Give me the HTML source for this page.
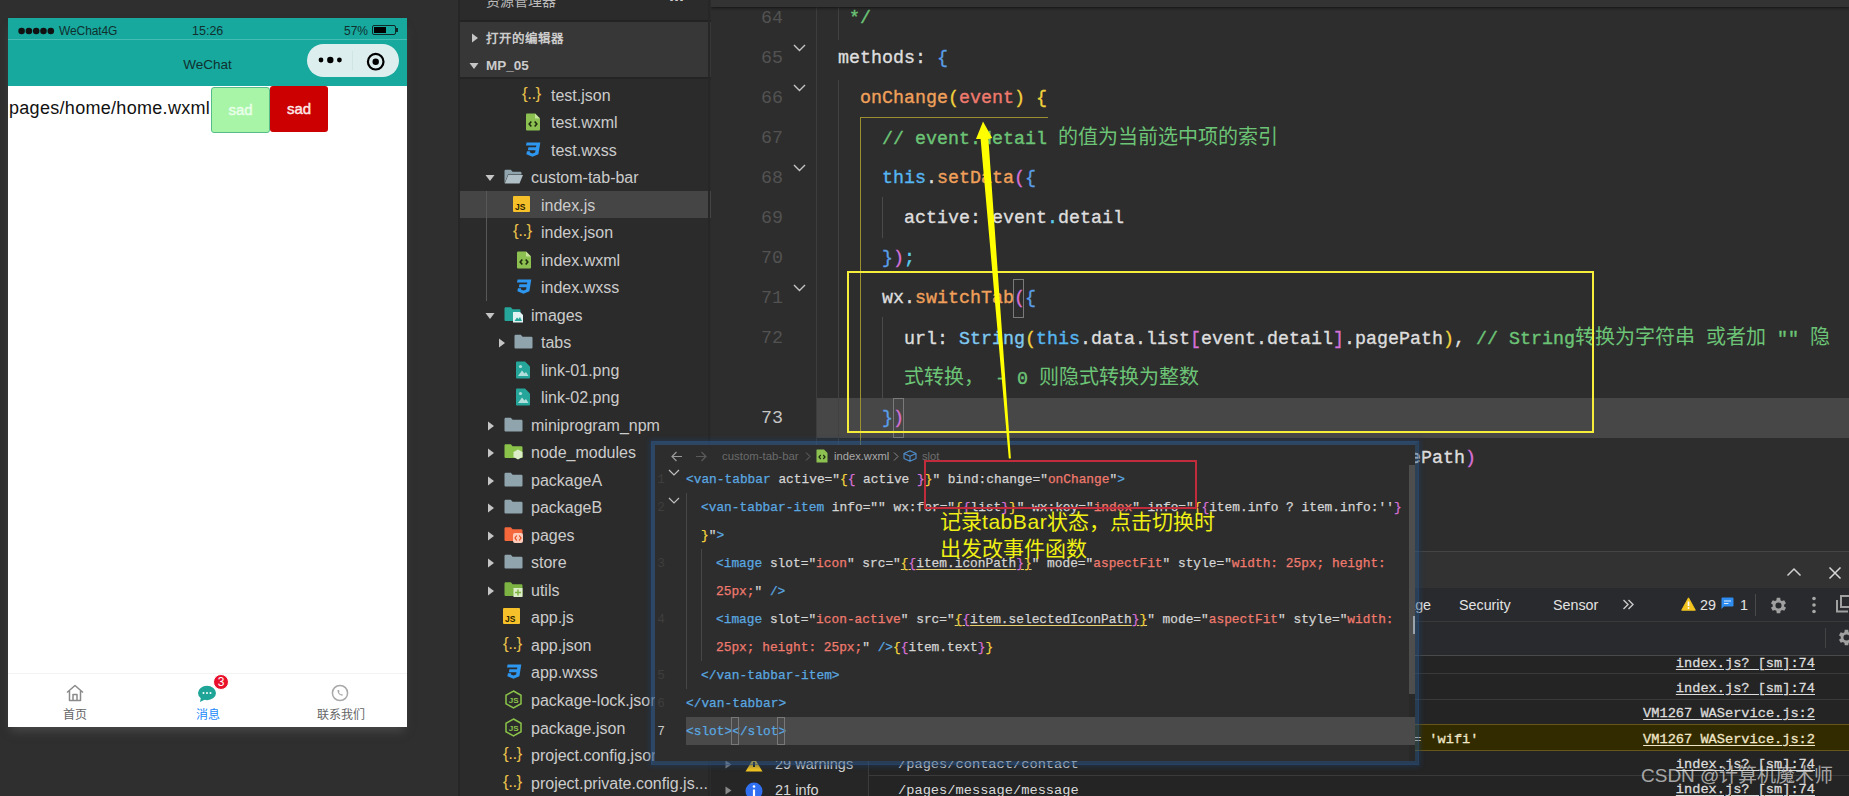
<!DOCTYPE html>
<html lang="zh-CN"><head><meta charset="utf-8">
<style>
*{margin:0;padding:0;box-sizing:border-box}
html,body{width:1849px;height:796px;overflow:hidden;background:#2f2f2f;font-family:"Liberation Sans",sans-serif}
.a{position:absolute}
.mono{font-family:"Liberation Mono",monospace}
/* phone */
#phone{left:8px;top:18px;width:399px;height:709px;background:#fff;box-shadow:0 7px 9px -3px rgba(75,75,75,.9);overflow:hidden}
#bar{left:0;top:0;width:399px;height:68px;background:#17a89e}
/* explorer */
#exp{left:458px;top:0;width:253px;height:796px;background:#2b2b2b;overflow:hidden;border-left:2px solid #262626}
.row{position:absolute;left:0;width:251px;height:28px;line-height:28px;font-size:16px;color:#cccccc;white-space:nowrap}
.row .t{position:absolute;top:0}
.row svg{position:absolute}
/* editor */
#ed{left:711px;top:0;width:1138px;height:796px;background:#2d2d2d;overflow:hidden}
.ln{position:absolute;left:0;width:72px;text-align:right;font-family:"Liberation Mono",monospace;font-size:18.33px;color:#525252;height:40px;line-height:40px}
.cl{position:absolute;font-family:"Liberation Mono",monospace;font-size:18.33px;height:40px;line-height:40px;white-space:pre;color:#dcdcdc;-webkit-text-stroke:0.35px currentColor}
.cj{font-size:20px;-webkit-text-stroke:0}
</style></head><body>

<!-- PHONE -->
<div id="phone" class="a">
  <div id="bar" class="a">
    <!-- status -->
    <div class="a" style="left:0;top:21px;width:399px;height:1px;background:#45bdb4"></div>
    <svg class="a" style="left:10px;top:7.5px" width="40" height="10" viewBox="0 0 40 10"><circle cx="3.6" cy="5" r="3.3" fill="#111"/><circle cx="10.9" cy="5" r="3.3" fill="#111"/><circle cx="18.2" cy="5" r="3.3" fill="#111"/><circle cx="25.5" cy="5" r="3.3" fill="#111"/><circle cx="32.8" cy="5" r="3.3" fill="#111"/></svg>
    <div class="a" style="left:51px;top:4.5px;font-size:12px;line-height:16px;color:#10302e;letter-spacing:-0.1px">WeChat4G</div>
    <div class="a" style="left:184px;top:4.5px;font-size:12.5px;line-height:16px;color:#10302e">15:26</div>
    <div class="a" style="left:336px;top:4.5px;font-size:12px;line-height:16px;color:#10302e">57%</div>
    <div class="a" style="left:364px;top:7px;width:24px;height:10px;border:1.5px solid #0f2a28;border-radius:2px"></div>
    <div class="a" style="left:366px;top:9px;width:12px;height:6px;background:#000"></div>
    <div class="a" style="left:388px;top:10px;width:2px;height:4px;background:#0f2a28"></div>
    <!-- nav -->
    <div class="a" style="left:0;top:38px;width:399px;text-align:center;font-size:13.5px;line-height:18px;color:#10302e">WeChat</div>
    <div class="a" style="left:299px;top:26px;width:92px;height:33px;border-radius:17px;background:#dcefee"></div>
    <div class="a" style="left:344px;top:33px;width:1px;height:19px;background:#cfe5e4"></div>
    <svg class="a" style="left:308px;top:37px" width="30" height="10" viewBox="0 0 30 10">
      <circle cx="5" cy="5" r="2.4" fill="#000"/><circle cx="14.3" cy="5" r="3.2" fill="#000"/><circle cx="23.4" cy="5" r="2.4" fill="#000"/>
    </svg>
    <svg class="a" style="left:357px;top:33px" width="22" height="22" viewBox="0 0 22 22">
      <circle cx="10.7" cy="10.7" r="7.8" fill="none" stroke="#000" stroke-width="2.2"/><circle cx="10.7" cy="10.7" r="3.2" fill="#000"/>
    </svg>
  </div>
  <!-- content -->
  <div class="a" style="left:1px;top:77.5px;font-size:18px;line-height:24px;color:#111;letter-spacing:0.3px">pages/home/home.wxml</div>
  <div class="a" style="left:203px;top:69px;width:59px;height:46px;background:#a8f5a8;border:1px solid #55bb88;border-radius:3px;color:#eaffea;font-size:15px;line-height:44px;text-align:center;-webkit-text-stroke:0.45px #eaffea">sad</div>
  <div class="a" style="left:262px;top:68px;width:58px;height:46px;background:#cc0000;border-radius:3px;color:#ffe8e8;font-size:15px;line-height:46px;text-align:center;-webkit-text-stroke:0.45px #ffe8e8">sad</div>
  <!-- tabbar -->
  <div class="a" style="left:0;top:655px;width:399px;height:1px;background:#f2f2f2"></div>
  <svg class="a" style="left:57px;top:665px" width="20" height="20" viewBox="0 0 20 20">
    <path d="M2 9.5 L10 2.5 L18 9.5 M4.5 8 V17.5 H15.5 V8 M8 17.5 V11.5 H12 V17.5" fill="none" stroke="#8a8a8a" stroke-width="1.5" stroke-linejoin="round"/>
  </svg>
  <div class="a" style="left:0;top:689px;width:133px;text-align:center;font-size:12px;line-height:16px;color:#646566">首页</div>
  <svg class="a" style="left:189px;top:666px" width="22" height="20" viewBox="0 0 22 20">
    <ellipse cx="10" cy="9" rx="9" ry="7.2" fill="#1fa598"/><path d="M4 13 L3 18 L9 15 Z" fill="#1fa598"/>
    <circle cx="6.5" cy="9" r="1" fill="#fff"/><circle cx="10" cy="9" r="1" fill="#fff"/><circle cx="13.5" cy="9" r="1" fill="#fff"/>
  </svg>
  <div class="a" style="left:205px;top:656px;width:16px;height:16px;border-radius:8px;background:#e8102a;border:1px solid #fff;color:#fff;font-size:12px;line-height:14px;text-align:center">3</div>
  <div class="a" style="left:133px;top:689px;width:133px;text-align:center;font-size:12px;line-height:16px;color:#1989fa">消息</div>
  <svg class="a" style="left:322px;top:665px" width="20" height="20" viewBox="0 0 20 20">
    <circle cx="10" cy="10" r="7.6" fill="none" stroke="#a8a8a8" stroke-width="1.5"/>
    <path d="M7.6 7 C7.2 9.5 9.2 12.4 12.3 12.8 L12.9 11.7 L11.7 10.9 L11.1 11.5 C10.1 11 9.3 10.1 9 9.1 L9.6 8.5 L9 7 Z" fill="#a8a8a8"/>
  </svg>
  <div class="a" style="left:266px;top:689px;width:133px;text-align:center;font-size:12px;line-height:16px;color:#646566">联系我们</div>
</div>

<!-- EXP -->
<div id="exp" class="a">
  <div class="a" style="left:26px;top:-8px;font-size:14px;line-height:18px;color:#bbbbbb">资源管理器</div>
  <div class="a" style="left:209px;top:-9px;font-size:18px;line-height:18px;color:#cccccc;font-weight:bold;letter-spacing:-1px">···</div>
  <div class="a" style="left:0;top:20px;width:251px;height:2px;background:#232323"></div>
  <div class="a" style="left:0;top:22px;width:251px;height:55px;background:#373737"></div>
  <svg class="a" style="left:11px;top:32.5px" width="8" height="10" viewBox="0 0 8 10"><path d="M1 0.5 V9.5 L7 5 Z" fill="#c5c5c5"/></svg>
  <div class="a" style="left:26px;top:27.5px;font-size:12.5px;line-height:22px;color:#cccccc;font-weight:bold">打开的编辑器</div>
  <svg class="a" style="left:9px;top:62px" width="10" height="8" viewBox="0 0 10 8"><path d="M0.5 1 H9.5 L5 7 Z" fill="#c5c5c5"/></svg>
  <div class="a" style="left:26px;top:54.5px;font-size:13.5px;line-height:22px;color:#cccccc;font-weight:bold">MP_05</div>
  <div class="a" style="left:0;top:77px;width:251px;height:2px;background:#242424"></div>
  <div class="a" style="left:0;top:191px;width:251px;height:27px;background:#454545"></div>
  <div class="a" style="left:26px;top:191px;width:1px;height:110px;background:#585858"></div>

<div class="row" style="top:81.5px"><div class="a" style="left:62px;top:-1px;font-size:17px;line-height:26px;color:#e8c04a;letter-spacing:-0.5px">{..}</div><span class="t" style="left:91px">test.json</span></div>
<div class="row" style="top:109.0px"><svg style="left:65px;top:4px" width="16" height="18" viewBox="0 0 16 18"><path d="M1 1.5 Q1 0.5 2 0.5 H10 L15 5.5 V16.5 Q15 17.5 14 17.5 H2 Q1 17.5 1 16.5 Z" fill="#8cc152"/><path d="M10 0.5 V5.5 H15" fill="#c5e39a"/><path d="M6.3 8.5 L4.2 11 L6.3 13.5 M9.7 8.5 L11.8 11 L9.7 13.5" fill="none" stroke="#1e2a10" stroke-width="1.6"/></svg><span class="t" style="left:91px">test.wxml</span></div>
<div class="row" style="top:136.5px"><svg style="left:64px;top:4px" width="18" height="18" viewBox="0 0 18 18"><path d="M2.6 1.5 H16.3 L14.4 13.2 L8.5 15.8 L2.4 13.2 L2.9 10.3 H6.1 L5.9 11.6 L8.6 12.6 L11.1 11.6 L11.5 9.2 H3.9 L4.4 6.3 H12 L12.3 4.6 H2 Z" fill="#2e97f0"/></svg><span class="t" style="left:91px">test.wxss</span></div>
<div class="row" style="top:164.1px"><svg style="left:25px;top:10px" width="10" height="8" viewBox="0 0 10 8"><path d="M0.5 1 H9.5 L5 7 Z" fill="#c5c5c5"/></svg><svg style="left:44px;top:5px" width="19" height="15" viewBox="0 0 19 15"><path d="M0.5 2 Q0.5 0.8 1.7 0.8 H6.8 L8.6 2.8 H16.3 Q17.5 2.8 17.5 4 V5.5 H4 L0.5 14.5 Z" fill="#90a4ae"/><path d="M4.2 6 H19 L15.5 14.5 H0.8 Z" fill="#b0bec5"/></svg><span class="t" style="left:71px">custom-tab-bar</span></div>
<div class="row" style="top:191.6px"><svg style="left:53px;top:4px" width="17" height="16" viewBox="0 0 17 16"><rect x="0" y="0" width="17" height="16" rx="1" fill="#f5c02a"/><text x="12.5" y="13.5" text-anchor="end" font-family="Liberation Sans" font-weight="bold" font-size="8.5" fill="#2a2000">JS</text></svg><span class="t" style="left:81px">index.js</span></div>
<div class="row" style="top:219.1px"><div class="a" style="left:53px;top:-1px;font-size:17px;line-height:26px;color:#e8c04a;letter-spacing:-0.5px">{..}</div><span class="t" style="left:81px">index.json</span></div>
<div class="row" style="top:246.6px"><svg style="left:56px;top:4px" width="16" height="18" viewBox="0 0 16 18"><path d="M1 1.5 Q1 0.5 2 0.5 H10 L15 5.5 V16.5 Q15 17.5 14 17.5 H2 Q1 17.5 1 16.5 Z" fill="#8cc152"/><path d="M10 0.5 V5.5 H15" fill="#c5e39a"/><path d="M6.3 8.5 L4.2 11 L6.3 13.5 M9.7 8.5 L11.8 11 L9.7 13.5" fill="none" stroke="#1e2a10" stroke-width="1.6"/></svg><span class="t" style="left:81px">index.wxml</span></div>
<div class="row" style="top:274.1px"><svg style="left:55px;top:4px" width="18" height="18" viewBox="0 0 18 18"><path d="M2.6 1.5 H16.3 L14.4 13.2 L8.5 15.8 L2.4 13.2 L2.9 10.3 H6.1 L5.9 11.6 L8.6 12.6 L11.1 11.6 L11.5 9.2 H3.9 L4.4 6.3 H12 L12.3 4.6 H2 Z" fill="#2e97f0"/></svg><span class="t" style="left:81px">index.wxss</span></div>
<div class="row" style="top:301.7px"><svg style="left:25px;top:10px" width="10" height="8" viewBox="0 0 10 8"><path d="M0.5 1 H9.5 L5 7 Z" fill="#c5c5c5"/></svg><svg style="left:44px;top:4px" width="20" height="17" viewBox="0 0 20 17"><path d="M0.5 2.5 Q0.5 1.3 1.7 1.3 H6.8 L8.6 3.3 H15.3 Q16.5 3.3 16.5 4.5 V15 H1.5 Q0.5 15 0.5 14 Z" fill="#26a69a"/><path d="M9 6 H16 L19 9 V16.5 H9 Z" fill="#e0f2f1"/><path d="M10.5 15 L13 11.5 L14.5 13 L16 11 L18 15 Z" fill="#26a69a"/></svg><span class="t" style="left:71px">images</span></div>
<div class="row" style="top:329.2px"><svg style="left:38px;top:9px" width="8" height="10" viewBox="0 0 8 10"><path d="M1 0.5 V9.5 L7 5 Z" fill="#c5c5c5"/></svg><svg style="left:54px;top:5px" width="19" height="15" viewBox="0 0 19 15"><path d="M0.5 2 Q0.5 0.8 1.7 0.8 H6.8 L8.6 2.8 H17.3 Q18.5 2.8 18.5 4 V13.5 Q18.5 14.5 17.5 14.5 H1.5 Q0.5 14.5 0.5 13.5 Z" fill="#90a4ae"/></svg><span class="t" style="left:81px">tabs</span></div>
<div class="row" style="top:356.7px"><svg style="left:55px;top:4px" width="16" height="18" viewBox="0 0 16 18"><path d="M1 1.5 Q1 0.5 2 0.5 H10 L15 5.5 V16.5 Q15 17.5 14 17.5 H2 Q1 17.5 1 16.5 Z" fill="#26a69a"/><path d="M3.5 3 H9 V7 H13 V15 H3.5 Z" fill="#2b2b2b" opacity="0.0"/><circle cx="5.5" cy="5.5" r="1.6" fill="#b2dfdb"/><path d="M3 15 L7 9.5 L9.5 12.5 L11 11 L13.5 15 Z" fill="#b2dfdb"/></svg><span class="t" style="left:81px">link-01.png</span></div>
<div class="row" style="top:384.2px"><svg style="left:55px;top:4px" width="16" height="18" viewBox="0 0 16 18"><path d="M1 1.5 Q1 0.5 2 0.5 H10 L15 5.5 V16.5 Q15 17.5 14 17.5 H2 Q1 17.5 1 16.5 Z" fill="#26a69a"/><path d="M3.5 3 H9 V7 H13 V15 H3.5 Z" fill="#2b2b2b" opacity="0.0"/><circle cx="5.5" cy="5.5" r="1.6" fill="#b2dfdb"/><path d="M3 15 L7 9.5 L9.5 12.5 L11 11 L13.5 15 Z" fill="#b2dfdb"/></svg><span class="t" style="left:81px">link-02.png</span></div>
<div class="row" style="top:411.7px"><svg style="left:27px;top:9px" width="8" height="10" viewBox="0 0 8 10"><path d="M1 0.5 V9.5 L7 5 Z" fill="#c5c5c5"/></svg><svg style="left:44px;top:5px" width="19" height="15" viewBox="0 0 19 15"><path d="M0.5 2 Q0.5 0.8 1.7 0.8 H6.8 L8.6 2.8 H17.3 Q18.5 2.8 18.5 4 V13.5 Q18.5 14.5 17.5 14.5 H1.5 Q0.5 14.5 0.5 13.5 Z" fill="#90a4ae"/></svg><span class="t" style="left:71px">miniprogram_npm</span></div>
<div class="row" style="top:439.3px"><svg style="left:27px;top:9px" width="8" height="10" viewBox="0 0 8 10"><path d="M1 0.5 V9.5 L7 5 Z" fill="#c5c5c5"/></svg><svg style="left:44px;top:4px" width="20" height="17" viewBox="0 0 20 17"><path d="M0.5 2.5 Q0.5 1.3 1.7 1.3 H6.8 L8.6 3.3 H17.3 Q18.5 3.3 18.5 4.5 V15 H1.5 Q0.5 15 0.5 14 Z" fill="#8bc34a"/><path d="M14 6.5 L18.5 9 V14 L14 16.5 L9.5 14 V9 Z" fill="#dcedc8"/></svg><span class="t" style="left:71px">node_modules</span></div>
<div class="row" style="top:466.8px"><svg style="left:27px;top:9px" width="8" height="10" viewBox="0 0 8 10"><path d="M1 0.5 V9.5 L7 5 Z" fill="#c5c5c5"/></svg><svg style="left:44px;top:5px" width="19" height="15" viewBox="0 0 19 15"><path d="M0.5 2 Q0.5 0.8 1.7 0.8 H6.8 L8.6 2.8 H17.3 Q18.5 2.8 18.5 4 V13.5 Q18.5 14.5 17.5 14.5 H1.5 Q0.5 14.5 0.5 13.5 Z" fill="#90a4ae"/></svg><span class="t" style="left:71px">packageA</span></div>
<div class="row" style="top:494.3px"><svg style="left:27px;top:9px" width="8" height="10" viewBox="0 0 8 10"><path d="M1 0.5 V9.5 L7 5 Z" fill="#c5c5c5"/></svg><svg style="left:44px;top:5px" width="19" height="15" viewBox="0 0 19 15"><path d="M0.5 2 Q0.5 0.8 1.7 0.8 H6.8 L8.6 2.8 H17.3 Q18.5 2.8 18.5 4 V13.5 Q18.5 14.5 17.5 14.5 H1.5 Q0.5 14.5 0.5 13.5 Z" fill="#90a4ae"/></svg><span class="t" style="left:71px">packageB</span></div>
<div class="row" style="top:521.8px"><svg style="left:27px;top:9px" width="8" height="10" viewBox="0 0 8 10"><path d="M1 0.5 V9.5 L7 5 Z" fill="#c5c5c5"/></svg><svg style="left:44px;top:4px" width="20" height="17" viewBox="0 0 20 17"><path d="M0.5 2.5 Q0.5 1.3 1.7 1.3 H6.8 L8.6 3.3 H17.3 Q18.5 3.3 18.5 4.5 V15 H1.5 Q0.5 15 0.5 14 Z" fill="#f4683c"/><rect x="9" y="7" width="10" height="10" rx="2" fill="#ffccbc"/><path d="M12.8 9.5 L11 12 L12.8 14.5 M15.2 9.5 L17 12 L15.2 14.5" fill="none" stroke="#e64a19" stroke-width="1.2"/></svg><span class="t" style="left:71px">pages</span></div>
<div class="row" style="top:549.3px"><svg style="left:27px;top:9px" width="8" height="10" viewBox="0 0 8 10"><path d="M1 0.5 V9.5 L7 5 Z" fill="#c5c5c5"/></svg><svg style="left:44px;top:5px" width="19" height="15" viewBox="0 0 19 15"><path d="M0.5 2 Q0.5 0.8 1.7 0.8 H6.8 L8.6 2.8 H17.3 Q18.5 2.8 18.5 4 V13.5 Q18.5 14.5 17.5 14.5 H1.5 Q0.5 14.5 0.5 13.5 Z" fill="#90a4ae"/></svg><span class="t" style="left:71px">store</span></div>
<div class="row" style="top:576.9px"><svg style="left:27px;top:9px" width="8" height="10" viewBox="0 0 8 10"><path d="M1 0.5 V9.5 L7 5 Z" fill="#c5c5c5"/></svg><svg style="left:44px;top:4px" width="20" height="17" viewBox="0 0 20 17"><path d="M0.5 2.5 Q0.5 1.3 1.7 1.3 H6.8 L8.6 3.3 H17.3 Q18.5 3.3 18.5 4.5 V15 H1.5 Q0.5 15 0.5 14 Z" fill="#7cb342"/><rect x="9.5" y="7" width="9" height="9" fill="#dcedc8"/><path d="M14 8.5 V14.5 M11 11.5 H17" stroke="#7cb342" stroke-width="1.4"/></svg><span class="t" style="left:71px">utils</span></div>
<div class="row" style="top:604.4px"><svg style="left:43px;top:4px" width="17" height="16" viewBox="0 0 17 16"><rect x="0" y="0" width="17" height="16" rx="1" fill="#f5c02a"/><text x="12.5" y="13.5" text-anchor="end" font-family="Liberation Sans" font-weight="bold" font-size="8.5" fill="#2a2000">JS</text></svg><span class="t" style="left:71px">app.js</span></div>
<div class="row" style="top:631.9px"><div class="a" style="left:43px;top:-1px;font-size:17px;line-height:26px;color:#e8c04a;letter-spacing:-0.5px">{..}</div><span class="t" style="left:71px">app.json</span></div>
<div class="row" style="top:659.4px"><svg style="left:45px;top:4px" width="18" height="18" viewBox="0 0 18 18"><path d="M2.6 1.5 H16.3 L14.4 13.2 L8.5 15.8 L2.4 13.2 L2.9 10.3 H6.1 L5.9 11.6 L8.6 12.6 L11.1 11.6 L11.5 9.2 H3.9 L4.4 6.3 H12 L12.3 4.6 H2 Z" fill="#2e97f0"/></svg><span class="t" style="left:71px">app.wxss</span></div>
<div class="row" style="top:686.9px"><svg style="left:44px;top:3px" width="19" height="19" viewBox="0 0 19 19"><path d="M9.5 1 L17 5.3 V13.7 L9.5 18 L2 13.7 V5.3 Z" fill="none" stroke="#8bc34a" stroke-width="1.5"/><text x="9.6" y="13" text-anchor="middle" font-family="Liberation Sans" font-weight="bold" font-size="8" fill="#8bc34a">JS</text></svg><span class="t" style="left:71px">package-lock.json</span></div>
<div class="row" style="top:714.5px"><svg style="left:44px;top:3px" width="19" height="19" viewBox="0 0 19 19"><path d="M9.5 1 L17 5.3 V13.7 L9.5 18 L2 13.7 V5.3 Z" fill="none" stroke="#8bc34a" stroke-width="1.5"/><text x="9.6" y="13" text-anchor="middle" font-family="Liberation Sans" font-weight="bold" font-size="8" fill="#8bc34a">JS</text></svg><span class="t" style="left:71px">package.json</span></div>
<div class="row" style="top:742.0px"><div class="a" style="left:43px;top:-1px;font-size:17px;line-height:26px;color:#e8c04a;letter-spacing:-0.5px">{..}</div><span class="t" style="left:71px">project.config.json</span></div>
<div class="row" style="top:769.5px"><div class="a" style="left:43px;top:-1px;font-size:17px;line-height:26px;color:#e8c04a;letter-spacing:-0.5px">{..}</div><span class="t" style="left:71px">project.private.config.js...</span></div>
<div class="a" style="left:248px;top:0;width:2px;height:796px;background:#272727"></div>
</div>

<!-- /EXP -->

<!-- ED -->
<div id="ed" class="a">
<div class="a" style="left:105px;top:398px;width:1100px;height:40px;background:#474747"></div>
<div class="a" style="left:105px;top:0;width:1px;height:796px;background:#3d3d3d"></div>
<div class="a" style="left:127px;top:0;width:1px;height:40px;background:#414141"></div>
<div class="a" style="left:127px;top:80px;width:1px;height:400px;background:#414141"></div>
<div class="a" style="left:171px;top:197px;width:1px;height:41px;background:#4a4a4a"></div>
<div class="a" style="left:171px;top:317px;width:1px;height:81px;background:#4a4a4a"></div>
<div class="a" style="left:149px;top:117px;width:188px;height:1px;background:#9c8f30"></div>
<div class="a" style="left:149px;top:117px;width:1px;height:360px;background:#9c8f30"></div>
<div class="ln" style="top:-1px">64</div>
<div class="cl" style="left:127px;top:-1px"><span style="color:#6cc476"> */</span></div>
<div class="ln" style="top:39px">65</div>
<div class="cl" style="left:127px;top:39px"><span style="color:#dedede">methods: </span><span style="color:#5a9ee8">{</span></div>
<div class="ln" style="top:79px">66</div>
<div class="cl" style="left:149px;top:79px"><span style="color:#f0a05a">onChange</span><span style="color:#f2d23c">(</span><span style="color:#f07a6e">event</span><span style="color:#f2d23c">)</span><span style="color:#dedede"> </span><span style="color:#f2d23c">{</span></div>
<div class="ln" style="top:119px">67</div>
<div class="cl" style="left:171px;top:119px"><span style="color:#6cc476">// event.detail <span class="cj">的</span><span class="cj">值</span><span class="cj">为</span><span class="cj">当</span><span class="cj">前</span><span class="cj">选</span><span class="cj">中</span><span class="cj">项</span><span class="cj">的</span><span class="cj">索</span><span class="cj">引</span></span></div>
<div class="ln" style="top:159px">68</div>
<div class="cl" style="left:171px;top:159px"><span style="color:#56b6f0">this</span><span style="color:#dedede">.</span><span style="color:#f0a05a">setData</span><span style="color:#d670d6">(</span><span style="color:#5a9ee8">{</span></div>
<div class="ln" style="top:199px">69</div>
<div class="cl" style="left:193px;top:199px"><span style="color:#dedede">active: event</span><span style="color:#5ad0f0">.</span><span style="color:#dedede">detail</span></div>
<div class="ln" style="top:239px">70</div>
<div class="cl" style="left:171px;top:239px"><span style="color:#5a9ee8">}</span><span style="color:#d670d6">)</span><span style="color:#5ad0f0">;</span></div>
<div class="ln" style="top:279px">71</div>
<div class="cl" style="left:171px;top:279px"><span style="color:#dedede">wx.</span><span style="color:#f0a05a">switchTab</span><span style="color:#d670d6">(</span><span style="color:#5a9ee8">{</span></div>
<div class="ln" style="top:319px">72</div>
<div class="cl" style="left:193px;top:319px"><span style="color:#dedede">url: </span><span style="color:#7ec8f0">String</span><span style="color:#f2d23c">(</span><span style="color:#56b6f0">this</span><span style="color:#dedede">.data.list</span><span style="color:#d670d6">[</span><span style="color:#dedede">event.detail</span><span style="color:#d670d6">]</span><span style="color:#dedede">.pagePath</span><span style="color:#f2d23c">)</span><span style="color:#dedede">, </span><span style="color:#6cc476">// String<span class="cj">转</span><span class="cj">换</span><span class="cj">为</span><span class="cj">字</span><span class="cj">符</span><span class="cj">串</span> <span class="cj">或</span><span class="cj">者</span><span class="cj">加</span> &quot;&quot; <span class="cj">隐</span></span></div>
<div class="cl" style="left:193px;top:359px"><span style="color:#6cc476"><span class="cj">式</span><span class="cj">转</span><span class="cj">换</span><span class="cj">，</span> - 0 <span class="cj">则</span><span class="cj">隐</span><span class="cj">式</span><span class="cj">转</span><span class="cj">换</span><span class="cj">为</span><span class="cj">整</span><span class="cj">数</span></span></div>
<div class="ln" style="top:399px;color:#c6c6c6">73</div>
<div class="cl" style="left:171px;top:399px"><span style="color:#5a9ee8">}</span><span style="color:#d670d6">)</span></div>
<div class="ln" style="top:439px">74</div>
<div class="cl" style="left:699px;top:439px"><span style="color:#dedede">ePath</span><span style="color:#d670d6">)</span></div>
<div class="a" style="left:302px;top:279px;width:11px;height:39px;border:1px solid #7a7a7a"></div>
<div class="a" style="left:182px;top:398px;width:11px;height:40px;border:1px solid #7a7a7a"></div>
<svg class="a" style="left:82px;top:44px" width="13" height="8" viewBox="0 0 13 8"><path d="M1 1 L6.5 6.5 L12 1" fill="none" stroke="#c5c5c5" stroke-width="1.4"/></svg>
<svg class="a" style="left:82px;top:84px" width="13" height="8" viewBox="0 0 13 8"><path d="M1 1 L6.5 6.5 L12 1" fill="none" stroke="#c5c5c5" stroke-width="1.4"/></svg>
<svg class="a" style="left:82px;top:164px" width="13" height="8" viewBox="0 0 13 8"><path d="M1 1 L6.5 6.5 L12 1" fill="none" stroke="#c5c5c5" stroke-width="1.4"/></svg>
<svg class="a" style="left:82px;top:284px" width="13" height="8" viewBox="0 0 13 8"><path d="M1 1 L6.5 6.5 L12 1" fill="none" stroke="#c5c5c5" stroke-width="1.4"/></svg>
<div class="a" style="left:0;top:0;width:1138px;height:7px;background:#333333;box-shadow:0 1px 3px #151515"></div>
</div>

<!-- /ED -->

<!-- DEV -->
<div class="a" style="left:711px;top:551px;width:1138px;height:245px;background:#242424;overflow:hidden">
<div class="a" style="left:0px;top:0px;width:1138px;height:1px;background:#454545;"></div>
<div class="a" style="left:0px;top:1px;width:1138px;height:36px;background:#323232;"></div>
<div class="a" style="left:0px;top:37px;width:1138px;height:67px;background:#292a2d;"></div>
<div class="a" style="left:0px;top:70px;width:1138px;height:1px;background:#3a3a3a;"></div>
<div class="a" style="left:0px;top:104px;width:1138px;height:1px;background:#4a4a4a;"></div>
<svg class="a" style="left:1075px;top:16px" width="16" height="10" viewBox="0 0 16 10"><path d="M1.5 8.5 L8 2 L14.5 8.5" fill="none" stroke="#d0d0d0" stroke-width="1.5"/></svg>
<svg class="a" style="left:1117px;top:15px" width="14" height="14" viewBox="0 0 14 14"><path d="M1.5 1.5 L12.5 12.5 M12.5 1.5 L1.5 12.5" fill="none" stroke="#d8d8d8" stroke-width="1.5"/></svg>
<div class="a" style="left:670px;top:45px;font-size:14.3px;line-height:18px;color:#e3e3e3;white-space:nowrap">Storage</div>
<div class="a" style="left:748px;top:45px;font-size:14.3px;line-height:18px;color:#e3e3e3;white-space:nowrap">Security</div>
<div class="a" style="left:842px;top:45px;font-size:14.3px;line-height:18px;color:#e3e3e3;white-space:nowrap">Sensor</div>
<svg class="a" style="left:911px;top:48px" width="13" height="11" viewBox="0 0 13 11"><path d="M1.5 1 L6 5.5 L1.5 10 M6.5 1 L11 5.5 L6.5 10" fill="none" stroke="#c8c8c8" stroke-width="1.4"/></svg>
<svg class="a" style="left:970px;top:46px" width="15" height="14" viewBox="0 0 15 14"><path d="M7.5 0.8 L14.3 13.2 H0.7 Z" fill="#f2c420" stroke="#f2c420" stroke-linejoin="round" stroke-width="1"/><path d="M7.5 4.5 V9" stroke="#fff" stroke-width="1.6"/><circle cx="7.5" cy="11" r="0.9" fill="#fff"/></svg>
<div class="a" style="left:989px;top:45px;font-size:14.3px;line-height:18px;color:#e3e3e3;white-space:nowrap">29</div>
<svg class="a" style="left:1010px;top:46px" width="13" height="13" viewBox="0 0 13 13"><path d="M0.5 1.5 Q0.5 0.5 1.5 0.5 H11.5 Q12.5 0.5 12.5 1.5 V8.5 Q12.5 9.5 11.5 9.5 H3 L0.5 12 Z" fill="#2f8cf0"/><path d="M3 4 H10 M3 6.5 H7.5" stroke="#dfeeff" stroke-width="1.1"/></svg>
<div class="a" style="left:1029px;top:45px;font-size:14.3px;line-height:18px;color:#e3e3e3;white-space:nowrap">1</div>
<div class="a" style="left:1044px;top:43px;width:1px;height:22px;background:#4a4a4a;"></div>
<svg class="a" style="left:1057px;top:44px" width="21" height="21" viewBox="0 0 24 24"><path d="M19.4 13a7.5 7.5 0 0 0 0-2l2.1-1.6-2-3.5-2.5 1a7.6 7.6 0 0 0-1.7-1L15 3.2h-4l-.4 2.7a7.6 7.6 0 0 0-1.7 1l-2.5-1-2 3.5L6.5 11a7.5 7.5 0 0 0 0 2l-2.1 1.6 2 3.5 2.5-1a7.6 7.6 0 0 0 1.7 1l.4 2.7h4l.4-2.7a7.6 7.6 0 0 0 1.7-1l2.5 1 2-3.5zM13 15.5a3.5 3.5 0 1 1 0-7 3.5 3.5 0 0 1 0 7z" transform="translate(-1 0)" fill="#a0a0a0"/></svg>
<svg class="a" style="left:1099px;top:44px" width="8" height="20" viewBox="0 0 8 20"><circle cx="4" cy="3.5" r="1.8" fill="#a8a8a8"/><circle cx="4" cy="10" r="1.8" fill="#a8a8a8"/><circle cx="4" cy="16.5" r="1.8" fill="#a8a8a8"/></svg>
<svg class="a" style="left:1125px;top:44px" width="16" height="18" viewBox="0 0 16 18"><path d="M1 5 V16.5 H12" fill="none" stroke="#a0a0a0" stroke-width="2"/><rect x="5" y="1" width="11" height="11" fill="none" stroke="#a0a0a0" stroke-width="2"/></svg>
<div class="a" style="left:1114px;top:77px;width:1px;height:20px;background:#444;"></div>
<svg class="a" style="left:1125px;top:76px" width="21" height="21" viewBox="0 0 24 24"><path d="M19.4 13a7.5 7.5 0 0 0 0-2l2.1-1.6-2-3.5-2.5 1a7.6 7.6 0 0 0-1.7-1L15 3.2h-4l-.4 2.7a7.6 7.6 0 0 0-1.7 1l-2.5-1-2 3.5L6.5 11a7.5 7.5 0 0 0 0 2l-2.1 1.6 2 3.5 2.5-1a7.6 7.6 0 0 0 1.7 1l.4 2.7h4l.4-2.7a7.6 7.6 0 0 0 1.7-1l2.5 1 2-3.5zM13 15.5a3.5 3.5 0 1 1 0-7 3.5 3.5 0 0 1 0 7z" transform="translate(-1 0)" fill="#a0a0a0"/></svg>
<div class="a" style="left:0px;top:122px;width:1138px;height:1px;background:#3a3a3a;"></div>
<div class="a mono" style="left:764px;top:103.5px;width:340px;text-align:right;font-size:13.65px;line-height:18px;color:#dcdcdc;-webkit-text-stroke:0.3px currentColor;text-decoration:underline;text-underline-offset:2px;white-space:pre">index.js? [sm]:74</div>
<div class="a" style="left:0px;top:148px;width:1138px;height:1px;background:#3a3a3a;"></div>
<div class="a mono" style="left:764px;top:128.5px;width:340px;text-align:right;font-size:13.65px;line-height:18px;color:#dcdcdc;-webkit-text-stroke:0.3px currentColor;text-decoration:underline;text-underline-offset:2px;white-space:pre">index.js? [sm]:74</div>
<div class="a" style="left:0px;top:173px;width:1138px;height:1px;background:#3a3a3a;"></div>
<div class="a mono" style="left:764px;top:154.0px;width:340px;text-align:right;font-size:13.65px;line-height:18px;color:#dcdcdc;-webkit-text-stroke:0.3px currentColor;text-decoration:underline;text-underline-offset:2px;white-space:pre">VM1267 WAService.js:2</div>
<div class="a" style="left:0px;top:173px;width:1138px;height:26px;background:#332b00;"></div>
<div class="a" style="left:0px;top:173px;width:1138px;height:1px;background:#66561a;"></div>
<div class="a" style="left:0px;top:199px;width:1138px;height:1px;background:#66561a;"></div>
<div class="a mono" style="left:764px;top:179.5px;width:340px;text-align:right;font-size:13.65px;line-height:18px;color:#f0e6c8;-webkit-text-stroke:0.3px currentColor;text-decoration:underline;text-underline-offset:2px;white-space:pre">VM1267 WAService.js:2</div>
<div class="a mono" style="left:702px;top:179.5px;font-size:13.65px;line-height:18px;color:#f0e6c8;-webkit-text-stroke:0.3px currentColor;white-space:pre">= 'wifi'</div>
<div class="a" style="left:0px;top:224px;width:1138px;height:1px;background:#3a3a3a;"></div>
<div class="a mono" style="left:764px;top:205.0px;width:340px;text-align:right;font-size:13.65px;line-height:18px;color:#dcdcdc;-webkit-text-stroke:0.3px currentColor;text-decoration:underline;text-underline-offset:2px;white-space:pre">index.js? [sm]:74</div>
<div class="a" style="left:0px;top:249px;width:1138px;height:1px;background:#3a3a3a;"></div>
<div class="a mono" style="left:764px;top:230.0px;width:340px;text-align:right;font-size:13.65px;line-height:18px;color:#dcdcdc;-webkit-text-stroke:0.3px currentColor;text-decoration:underline;text-underline-offset:2px;white-space:pre">index.js? [sm]:74</div>
<div class="a" style="left:0px;top:104px;width:158px;height:145px;background:#262626;"></div>
<div class="a" style="left:157px;top:104px;width:1px;height:145px;background:#3c3c3c;"></div>
<div class="a" style="left:158px;top:224px;width:980px;height:1px;background:#3a3a3a;"></div>
<svg class="a" style="left:14px;top:209px" width="7" height="9" viewBox="0 0 7 9"><path d="M0.5 0.5 V8.5 L6.5 4.5 Z" fill="#8a8a8a"/></svg>
<svg class="a" style="left:34px;top:206px" width="18" height="15" viewBox="0 0 18 15"><path d="M9 0.5 L17.5 14.5 H0.5 Z" fill="#f2c420"/><path d="M9 5 V10" stroke="#262626" stroke-width="2"/></svg>
<div class="a" style="left:64px;top:204px;font-size:14.5px;line-height:18px;color:#d8d8d8;white-space:nowrap">29 warnings</div>
<svg class="a" style="left:14px;top:235px" width="7" height="9" viewBox="0 0 7 9"><path d="M0.5 0.5 V8.5 L6.5 4.5 Z" fill="#8a8a8a"/></svg>
<svg class="a" style="left:34px;top:231px" width="18" height="18" viewBox="0 0 18 18"><circle cx="9" cy="9" r="8.5" fill="#2f6ff0"/><path d="M9 7.5 V14" stroke="#fff" stroke-width="2.2"/><circle cx="9" cy="4.5" r="1.3" fill="#fff"/></svg>
<div class="a" style="left:64px;top:230px;font-size:14.5px;line-height:18px;color:#d8d8d8;white-space:nowrap">21 info</div>
<div class="a mono" style="left:187px;top:205px;font-size:13.7px;line-height:18px;color:#dcdcdc;white-space:pre">/pages/contact/contact</div>
<div class="a mono" style="left:187px;top:231px;font-size:13.7px;line-height:18px;color:#dcdcdc;white-space:pre">/pages/message/message</div>
</div>

<!-- /DEV -->
<!-- POP -->
<div class="a" style="left:651px;top:441px;width:768px;height:324px;background:#2d2d2d;border:4px solid rgba(45,88,138,0.6);border-right-color:rgba(45,88,138,0.45);border-bottom-color:rgba(45,88,138,0.5);background-clip:padding-box;box-shadow:0 0 4px 2px rgba(30,60,100,.45)">
<div class="a" style="left:0;top:0;width:760px;height:316px;overflow:hidden">
<div class="a" style="left:754px;top:20px;width:6px;height:296px;background:#292929"></div>
<div class="a" style="left:754px;top:20px;width:6px;height:229px;background:#4e4e4e"></div>
<div class="a" style="left:31px;top:272px;width:729px;height:28px;background:#4a4a4a"></div>
<div class="a" style="left:31px;top:48px;width:1px;height:196px;background:#474747"></div>
<div class="a" style="left:46px;top:104px;width:1px;height:112px;background:#474747"></div>
<svg class="a" style="left:15px;top:5px" width="40" height="13" viewBox="0 0 40 13"><path d="M12 6.5 H2 M6.5 2 L2 6.5 L6.5 11" fill="none" stroke="#9a9a9a" stroke-width="1.2"/><path d="M26 6.5 H36 M31.5 2 L36 6.5 L31.5 11" fill="none" stroke="#5a5a5a" stroke-width="1.2"/></svg>
<div class="a" style="left:67px;top:3px;font-size:11.4px;line-height:16px;color:#6a6a6a;white-space:nowrap">custom-tab-bar</div>
<svg class="a" style="left:150px;top:7px" width="6" height="9" viewBox="0 0 6 9"><path d="M1 0.5 L5 4.5 L1 8.5" fill="none" stroke="#6a6a6a" stroke-width="1"/></svg>
<svg class="a" style="left:161px;top:4px" width="12" height="14" viewBox="0 0 12 14"><path d="M0.5 1 Q0.5 0.5 1 0.5 H8 L11.5 4 V13 Q11.5 13.5 11 13.5 H1 Q0.5 13.5 0.5 13 Z" fill="#8cc152"/><path d="M4.7 6 L3 8 L4.7 10 M7.3 6 L9 8 L7.3 10" fill="none" stroke="#1e2a10" stroke-width="1.2"/></svg>
<div class="a" style="left:179px;top:3px;font-size:11.2px;line-height:16px;color:#a8a8a8;white-space:nowrap">index.wxml</div>
<svg class="a" style="left:238px;top:7px" width="6" height="9" viewBox="0 0 6 9"><path d="M1 0.5 L5 4.5 L1 8.5" fill="none" stroke="#8a8a8a" stroke-width="1"/></svg>
<svg class="a" style="left:248px;top:5px" width="14" height="12" viewBox="0 0 14 12"><path d="M7 0.8 L13 3.5 V8.5 L7 11.2 L1 8.5 V3.5 Z M1 3.5 L7 6.2 L13 3.5 M7 6.2 V11.2" fill="none" stroke="#4f8fd0" stroke-width="1.1" stroke-linejoin="round"/></svg>
<div class="a" style="left:267px;top:3px;font-size:11.2px;line-height:16px;color:#6e6e6e;white-space:nowrap">slot</div>
<div class="a mono" style="left:0;top:21px;width:10px;text-align:right;font-size:12.83px;line-height:28px;color:#3e3e3e">1</div>
<div class="a mono" style="left:31px;top:21px;font-size:12.83px;line-height:28px;white-space:pre;-webkit-text-stroke:0.25px currentColor"><span style="color:#5aa8e0;">&lt;van-tabbar</span><span style="color:#d4d4d4;"> active=&quot;</span><span style="color:#f2d23c;">{</span><span style="color:#d670d6;">{</span><span style="color:#d4d4d4;"> active </span><span style="color:#d670d6;">}</span><span style="color:#f2d23c;">}</span><span style="color:#d4d4d4;">&quot; bind:change=&quot;</span><span style="color:#f07a6e;">onChange</span><span style="color:#d4d4d4;">&quot;</span><span style="color:#5aa8e0;">&gt;</span></div>
<div class="a mono" style="left:0;top:49px;width:10px;text-align:right;font-size:12.83px;line-height:28px;color:#3e3e3e">2</div>
<div class="a mono" style="left:46px;top:49px;font-size:12.83px;line-height:28px;white-space:pre;-webkit-text-stroke:0.25px currentColor"><span style="color:#5aa8e0;">&lt;van-tabbar-item</span><span style="color:#d4d4d4;"> info=&quot;&quot; wx:for=&quot;</span><span style="color:#f2d23c;">{</span><span style="color:#d670d6;">{</span><span style="color:#d4d4d4;">list</span><span style="color:#d670d6;">}</span><span style="color:#f2d23c;">}</span><span style="color:#d4d4d4;">&quot; wx:key=&quot;</span><span style="color:#f07a6e;">index</span><span style="color:#d4d4d4;">&quot; info=&quot;</span><span style="color:#f2d23c;">{</span><span style="color:#d670d6;">{</span><span style="color:#d4d4d4;">item.info ? item.info:&#x27;&#x27;</span><span style="color:#d670d6;">}</span></div>
<div class="a mono" style="left:46px;top:77px;font-size:12.83px;line-height:28px;white-space:pre;-webkit-text-stroke:0.25px currentColor"><span style="color:#f2d23c;">}</span><span style="color:#d4d4d4;">&quot;</span><span style="color:#5aa8e0;">&gt;</span></div>
<div class="a mono" style="left:0;top:105px;width:10px;text-align:right;font-size:12.83px;line-height:28px;color:#3e3e3e">3</div>
<div class="a mono" style="left:61px;top:105px;font-size:12.83px;line-height:28px;white-space:pre;-webkit-text-stroke:0.25px currentColor"><span style="color:#5aa8e0;">&lt;image</span><span style="color:#d4d4d4;"> slot=&quot;</span><span style="color:#f07a6e;">icon</span><span style="color:#d4d4d4;">&quot; src=&quot;</span><span style="color:#f2d23c;text-decoration:underline;text-decoration-color:#e8d070;text-underline-offset:2px">{</span><span style="color:#d670d6;text-decoration:underline;text-decoration-color:#e8d070;text-underline-offset:2px">{</span><span style="color:#d4d4d4;text-decoration:underline;text-decoration-color:#e8d070;text-underline-offset:2px">item.iconPath</span><span style="color:#d670d6;text-decoration:underline;text-decoration-color:#e8d070;text-underline-offset:2px">}</span><span style="color:#f2d23c;text-decoration:underline;text-decoration-color:#e8d070;text-underline-offset:2px">}</span><span style="color:#d4d4d4;">&quot; mode=&quot;</span><span style="color:#f07a6e;">aspectFit</span><span style="color:#d4d4d4;">&quot; style=&quot;</span><span style="color:#f07a6e;">width: 25px; height:</span></div>
<div class="a mono" style="left:61px;top:133px;font-size:12.83px;line-height:28px;white-space:pre;-webkit-text-stroke:0.25px currentColor"><span style="color:#f07a6e;">25px;</span><span style="color:#d4d4d4;">&quot; </span><span style="color:#5aa8e0;">/&gt;</span></div>
<div class="a mono" style="left:0;top:161px;width:10px;text-align:right;font-size:12.83px;line-height:28px;color:#3e3e3e">4</div>
<div class="a mono" style="left:61px;top:161px;font-size:12.83px;line-height:28px;white-space:pre;-webkit-text-stroke:0.25px currentColor"><span style="color:#5aa8e0;">&lt;image</span><span style="color:#d4d4d4;"> slot=&quot;</span><span style="color:#f07a6e;">icon-active</span><span style="color:#d4d4d4;">&quot; src=&quot;</span><span style="color:#f2d23c;text-decoration:underline;text-decoration-color:#e8d070;text-underline-offset:2px">{</span><span style="color:#d670d6;text-decoration:underline;text-decoration-color:#e8d070;text-underline-offset:2px">{</span><span style="color:#d4d4d4;text-decoration:underline;text-decoration-color:#e8d070;text-underline-offset:2px">item.selectedIconPath</span><span style="color:#d670d6;text-decoration:underline;text-decoration-color:#e8d070;text-underline-offset:2px">}</span><span style="color:#f2d23c;text-decoration:underline;text-decoration-color:#e8d070;text-underline-offset:2px">}</span><span style="color:#d4d4d4;">&quot; mode=&quot;</span><span style="color:#f07a6e;">aspectFit</span><span style="color:#d4d4d4;">&quot; style=&quot;</span><span style="color:#f07a6e;">width:</span></div>
<div class="a mono" style="left:61px;top:189px;font-size:12.83px;line-height:28px;white-space:pre;-webkit-text-stroke:0.25px currentColor"><span style="color:#f07a6e;">25px; height: 25px;</span><span style="color:#d4d4d4;">&quot; </span><span style="color:#5aa8e0;">/&gt;</span><span style="color:#f2d23c;">{</span><span style="color:#d670d6;">{</span><span style="color:#d4d4d4;">item.text</span><span style="color:#d670d6;">}</span><span style="color:#f2d23c;">}</span></div>
<div class="a mono" style="left:0;top:217px;width:10px;text-align:right;font-size:12.83px;line-height:28px;color:#3e3e3e">5</div>
<div class="a mono" style="left:46px;top:217px;font-size:12.83px;line-height:28px;white-space:pre;-webkit-text-stroke:0.25px currentColor"><span style="color:#5aa8e0;">&lt;/van-tabbar-item&gt;</span></div>
<div class="a mono" style="left:0;top:245px;width:10px;text-align:right;font-size:12.83px;line-height:28px;color:#3e3e3e">6</div>
<div class="a mono" style="left:31px;top:245px;font-size:12.83px;line-height:28px;white-space:pre;-webkit-text-stroke:0.25px currentColor"><span style="color:#5aa8e0;">&lt;/van-tabbar&gt;</span></div>
<div class="a mono" style="left:0;top:273px;width:10px;text-align:right;font-size:12.83px;line-height:28px;color:#c8c8c8">7</div>
<div class="a mono" style="left:31px;top:273px;font-size:12.83px;line-height:28px;white-space:pre;-webkit-text-stroke:0.25px currentColor"><span style="color:#5aa8e0;">&lt;slot&gt;&lt;/slot&gt;</span></div>
<svg class="a" style="left:13px;top:24px" width="12" height="7" viewBox="0 0 12 7"><path d="M1 1 L6 6 L11 1" fill="none" stroke="#c0c0c0" stroke-width="1.2"/></svg>
<svg class="a" style="left:13px;top:52px" width="12" height="7" viewBox="0 0 12 7"><path d="M1 1 L6 6 L11 1" fill="none" stroke="#c0c0c0" stroke-width="1.2"/></svg>
<div class="a" style="left:76px;top:272px;width:8px;height:28px;border:1px solid #787878"></div>
<div class="a" style="left:122px;top:272px;width:8px;height:28px;border:1px solid #787878"></div>
</div></div>

<!-- /POP -->
<!-- ANN -->
<div class="a" style="left:847px;top:271px;width:747px;height:162px;border:2px solid #f6ee3a"></div>
<div class="a" style="left:924px;top:460px;width:273px;height:49px;border:2px solid #c02c3c"></div>
<div class="a" style="left:940px;top:508px;font-size:21px;line-height:27px;color:#f0f014;white-space:nowrap">记录<span style="letter-spacing:0.55px">tabBar</span>状态，点击切换时<br>出发改事件函数</div>
<svg class="a" style="left:0;top:0" width="1849" height="796" viewBox="0 0 1849 796">
  <polygon points="983,121.5 976,139 980.6,139 1008.8,458.5 1010.9,458.5 988.4,139 992.2,138" fill="#ffff00"/>
</svg>
<div class="a" style="left:1641px;top:765px;font-size:19px;line-height:22px;color:rgba(225,225,225,0.7);white-space:nowrap">CSDN @计算机魔术师</div>
<div class="a" style="left:1413px;top:616px;width:2px;height:18px;background:#9aa2aa"></div>

<!-- /ANN -->
</body></html>
